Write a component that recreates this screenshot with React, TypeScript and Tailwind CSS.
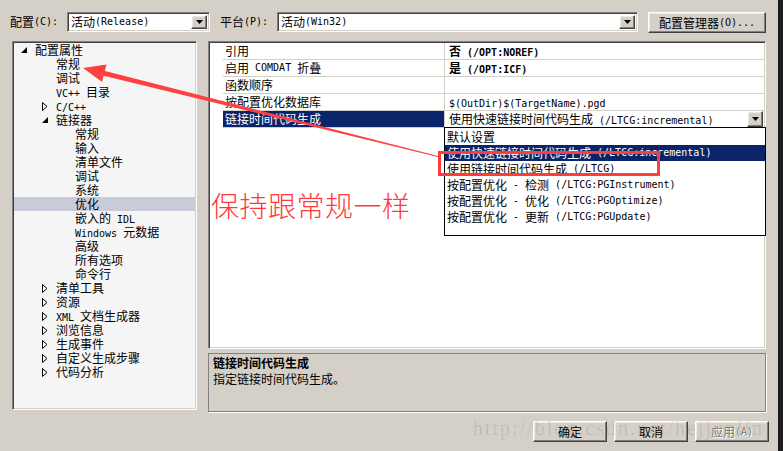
import React from "react";

const CJK = /([\u2E80-\u9FFF\u3000-\u303F\uFF00-\uFFEF]+)/;

// SimSun-like mix: CJK at 12px, latin as half-width mono
const T = ({ s }: { s: string }) => (
  <>
    {s.split(CJK).map((p, i) =>
      p === "" ? null : i % 2 === 1 ? (
        <span key={i} className="text-[12px]">
          {p}
        </span>
      ) : (
        <span key={i} className="font-['DejaVu_Sans_Mono',monospace] text-[10px] whitespace-pre">
          {p}
        </span>
      )
    )}
  </>
);

const raised =
  "bg-[#d4d0c8] border border-t-white border-l-white border-r-[#404040] border-b-[#404040] shadow-[inset_-1px_-1px_0_#808080,inset_1px_1px_0_#ece9e2]";

const DownTri = () => (
  <svg width="7" height="4" viewBox="0 0 7 4">
    <polygon points="0,0 7,0 3.5,4" fill="black" />
  </svg>
);

const Combo = ({ w, text }: { w: string; text: string }) => (
  <div
    className={`flex h-[20px] bg-white border border-t-[#808080] border-l-[#808080] border-r-white border-b-white shadow-[inset_1px_1px_0_#404040,inset_-1px_-1px_0_#d4d0c8] p-[2px] ${w}`}
  >
    <div className="flex-1 flex items-center pl-[1px]">
      <T s={text} />
    </div>
    <div className={`${raised} w-[16px] h-full flex items-center justify-center`}>
      <DownTri />
    </div>
  </div>
);

const Open = () => (
  <svg width="7" height="7" viewBox="0 0 7 7">
    <polygon points="6,0 6,6 0,6" fill="black" />
  </svg>
);

const Closed = () => (
  <svg width="6" height="9" viewBox="0 0 6 9">
    <polygon points="0.5,0.5 5,4.5 0.5,8.5" fill="none" stroke="black" />
  </svg>
);

type Node = { label: string; level: 0 | 1 | 2; icon?: "open" | "closed"; sel?: boolean };

const tree: Node[] = [
  { label: "配置属性", level: 0, icon: "open" },
  { label: "常规", level: 1 },
  { label: "调试", level: 1 },
  { label: "VC++ 目录", level: 1 },
  { label: "C/C++", level: 1, icon: "closed" },
  { label: "链接器", level: 1, icon: "open" },
  { label: "常规", level: 2 },
  { label: "输入", level: 2 },
  { label: "清单文件", level: 2 },
  { label: "调试", level: 2 },
  { label: "系统", level: 2 },
  { label: "优化", level: 2, sel: true },
  { label: "嵌入的 IDL", level: 2 },
  { label: "Windows 元数据", level: 2 },
  { label: "高级", level: 2 },
  { label: "所有选项", level: 2 },
  { label: "命令行", level: 2 },
  { label: "清单工具", level: 1, icon: "closed" },
  { label: "资源", level: 1, icon: "closed" },
  { label: "XML 文档生成器", level: 1, icon: "closed" },
  { label: "浏览信息", level: 1, icon: "closed" },
  { label: "生成事件", level: 1, icon: "closed" },
  { label: "自定义生成步骤", level: 1, icon: "closed" },
  { label: "代码分析", level: 1, icon: "closed" },
];

const indent = ["pl-[7px]", "pl-[28px]", "pl-[47px]"];

const props = [
  { name: "引用", value: "否 (/OPT:NOREF)", bold: true },
  { name: "启用 COMDAT 折叠", value: "是 (/OPT:ICF)", bold: true },
  { name: "函数顺序", value: "" },
  { name: "按配置优化数据库", value: "$(OutDir)$(TargetName).pgd" },
  { name: "链接时间代码生成", value: "使用快速链接时间代码生成 (/LTCG:incremental)", sel: true },
];

const options = [
  "默认设置",
  "使用快速链接时间代码生成 (/LTCG:incremental)",
  "使用链接时间代码生成 (/LTCG)",
  "按配置优化 - 检测 (/LTCG:PGInstrument)",
  "按配置优化 - 优化 (/LTCG:PGOptimize)",
  "按配置优化 - 更新 (/LTCG:PGUpdate)",
];

export default function App() {
  return (
    <div className="relative flex w-[783px] h-[451px] overflow-hidden bg-[#d4d0c8] text-black font-['Noto_Sans_CJK_SC',sans-serif] text-[12px] leading-none">
      <div className="w-[778px] flex flex-col">
        {/* top bar */}
        <div className="flex items-start h-[41px] pt-[12px] pl-[10px]">
          <span className="w-[57px] h-[20px] flex items-center">
            <T s="配置(C):" />
          </span>
          <Combo w="w-[143px]" text="活动(Release)" />
          <span className="ml-[10px] w-[57px] h-[20px] flex items-center">
            <T s="平台(P):" />
          </span>
          <Combo w="w-[361px]" text="活动(Win32)" />
          <button className={`${raised} ml-[10px] w-[118px] h-[21px] flex items-center justify-center`}>
            <T s="配置管理器(O)..." />
          </button>
        </div>

        {/* body */}
        <div className="flex h-[371px]">
          <div className="ml-[12px] w-[185px] h-[369px] bg-[#f5f5f5] border border-t-[#808080] border-l-[#808080] border-r-white border-b-white shadow-[inset_1px_1px_0_#404040,inset_-1px_-1px_0_#d4d0c8] p-[1px]">
            {tree.map((n, i) => (
              <div
                key={i}
                className={`flex items-center h-[14px] ${indent[n.level]} ${n.sel ? "bg-[#c9cbd9]" : ""}`}
              >
                <div className="w-[14px] flex items-center">
                  {n.icon === "open" ? <Open /> : n.icon === "closed" ? <Closed /> : null}
                </div>
                <div>
                  <T s={n.label} />
                </div>
              </div>
            ))}
          </div>

          <div className="ml-[11px] w-[558px] flex flex-col">
            <div className="h-[308px] bg-white border border-t-[#808080] border-l-[#808080] border-r-white border-b-white shadow-[inset_1px_1px_0_#404040,inset_-1px_-1px_0_#d4d0c8] p-[1px] flex">
              <div className="w-[13px]" />
              <div className="flex-1 flex flex-col">
                {props.map((p, i) => (
                  <div key={i} className="flex h-[17px] border-b border-[#d4d0c8]">
                    <div
                      className={`w-[222px] pl-[2px] flex items-center border-r border-[#d4d0c8] ${
                        p.sel ? "bg-[#0a246a] text-white" : ""
                      }`}
                    >
                      <T s={p.name} />
                    </div>
                    <div className={`flex-1 pl-[4px] flex items-center ${p.bold ? "font-bold" : ""}`}>
                      <div className="flex-1">
                        <T s={p.value} />
                      </div>
                      {p.sel && (
                        <div className={`${raised} w-[16px] h-[16px] mr-[1px] flex items-center justify-center`}>
                          <DownTri />
                        </div>
                      )}
                    </div>
                  </div>
                ))}
              </div>
            </div>

            <div className="mt-[4px] h-[59px] border border-[#808080] shadow-[1px_1px_0_white] px-[4px] pt-[3px] flex flex-col gap-[4px]">
              <div className="font-bold h-[12px] flex items-center">
                <T s="链接时间代码生成" />
              </div>
              <div className="h-[12px] flex items-center">
                <T s="指定链接时间代码生成。" />
              </div>
            </div>
          </div>
        </div>

        {/* buttons */}
        <div className="flex justify-end gap-[7px] pr-[9px] pt-[9px]">
          <button className={`${raised} w-[74px] h-[21px] flex items-center justify-center`}>
            <T s="确定" />
          </button>
          <button className={`${raised} w-[74px] h-[21px] flex items-center justify-center`}>
            <T s="取消" />
          </button>
          <button
            className={`${raised} w-[74px] h-[21px] flex items-center justify-center text-[#808080] [text-shadow:1px_1px_0_white]`}
          >
            <T s="应用(A)" />
          </button>
        </div>
      </div>
      <div className="w-[5px] h-full bg-[#1c1c1c]" />

      {/* open dropdown list */}
      <div className="absolute left-[444px] top-[127px] w-[322px] h-[109px] bg-white border border-black pt-[1px]">
        {options.map((o, i) => (
          <div
            key={i}
            className={`h-[16px] pl-[2px] flex items-center ${i === 1 ? "bg-[#0a246a] text-white" : ""}`}
          >
            <T s={o} />
          </div>
        ))}
      </div>

      {/* annotations */}
      <div className="absolute left-[438px] top-[151px] w-[222px] h-[25px] border-[3px] border-[#ff3c3c]" />
      <div className="absolute left-[211px] top-[191px] text-[28px] font-light tracking-[0.5px] leading-none text-[#ff3a3a] whitespace-nowrap">
        保持跟常规一样
      </div>
      <svg className="absolute left-0 top-0 pointer-events-none" width="783" height="451" viewBox="0 0 783 451">
        <polygon
          points="83,68 106.5,64.6 104.9,70.9 440.1,156.5 439.9,157.5 103.7,75.7 102.1,82"
          fill="#ff4040"
        />
      </svg>
      <div className="absolute left-[473px] top-[418px] text-[20px] tracking-[2px] font-['Liberation_Serif',serif] text-black/10 whitespace-nowrap pointer-events-none">
        http://blog.csdn.net/hejjunlin
      </div>
    </div>
  );
}
